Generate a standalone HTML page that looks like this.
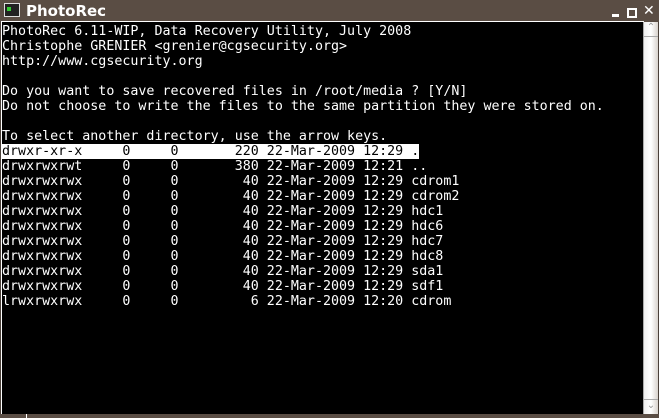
<!DOCTYPE html>
<html><head><style>
body{margin:0;width:659px;height:418px;background:#4a4039;position:relative;overflow:hidden}
#title{position:absolute;left:0;top:0;width:659px;height:22px;background:#5a4d44}
#title .t{position:absolute;left:26px;top:2px;font:bold 15px "DejaVu Sans","Liberation Sans",sans-serif;color:#fff}
#icon{position:absolute;left:4px;top:3px;width:14px;height:12px;background:#222;border:1px solid #ddd}
#term{position:absolute;left:1px;top:21px;width:642px;height:392px;background:#000;border-left:1px solid #fff;border-top:1px solid #fff;border-bottom:1px solid #fff}
pre{margin:0;position:absolute;left:0px;top:2px;font:13.33px/15px "DejaVu Sans Mono","Liberation Mono",monospace;color:#fff}
.hl{background:#fff;color:#000}
#sb{position:absolute;left:643px;top:22px;width:14px;height:392px;background:linear-gradient(90deg,#eee,#fff,#d8d2cc);border-left:1px solid #aaa}
.btn{position:absolute;left:0;width:14px;height:14px;border-bottom:1px solid #aaa;color:#999;font:10px sans-serif;text-align:center}
#bot{position:absolute;left:0;top:414px;width:659px;height:4px;background:#5a4d44}
.wb{position:absolute;top:6px;color:#fff;font:bold 13px "DejaVu Sans",sans-serif}
</style></head><body>
<div id="title"><div id="icon"><div style="position:absolute;left:2px;top:3px;width:4px;height:4px;background:#3c3"></div></div><div class="t">PhotoRec</div>
<div style="position:absolute;left:612px;top:14px;width:7px;height:3px;background:#fff"></div>
<div style="position:absolute;left:627px;top:8px;width:6px;height:6px;border:2px solid #fff;border-top-width:2px"></div>
<div class="wb" style="left:643px;top:3px;font-size:14px">✕</div>
</div>
<div id="term"><pre>PhotoRec 6.11-WIP, Data Recovery Utility, July 2008
Christophe GRENIER &lt;grenier@cgsecurity.org&gt;
http://www.cgsecurity.org

Do you want to save recovered files in /root/media ? [Y/N]
Do not choose to write the files to the same partition they were stored on.

To select another directory, use the arrow keys.
<span class="hl">drwxr-xr-x     0     0       220 22-Mar-2009 12:29 .</span>
drwxrwxrwt     0     0       380 22-Mar-2009 12:21 ..
drwxrwxrwx     0     0        40 22-Mar-2009 12:29 cdrom1
drwxrwxrwx     0     0        40 22-Mar-2009 12:29 cdrom2
drwxrwxrwx     0     0        40 22-Mar-2009 12:29 hdc1
drwxrwxrwx     0     0        40 22-Mar-2009 12:29 hdc6
drwxrwxrwx     0     0        40 22-Mar-2009 12:29 hdc7
drwxrwxrwx     0     0        40 22-Mar-2009 12:29 hdc8
drwxrwxrwx     0     0        40 22-Mar-2009 12:29 sda1
drwxrwxrwx     0     0        40 22-Mar-2009 12:29 sdf1
lrwxrwxrwx     0     0         6 22-Mar-2009 12:20 cdrom</pre></div>
<div id="sb"><div class="btn" style="top:0">⌃</div><div class="btn" style="top:377px;border-top:1px solid #aaa;border-bottom:none">⌄</div></div>
<div id="bot"><div style="position:absolute;left:26px;top:0;width:1px;height:4px;background:#fff"></div></div>
</body></html>
